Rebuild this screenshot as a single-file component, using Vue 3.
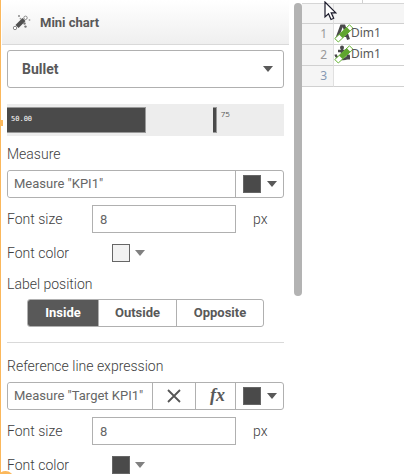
<script setup>
import { ref } from 'vue'

const chartType = ref('Bullet')
const measure = ref('Measure "KPI1"')
const target = ref('Measure "Target KPI1"')
const measureSize = ref('8')
const targetSize = ref('8')
const position = ref('Inside')
const positions = ['Inside', 'Outside', 'Opposite']
const value = 50
const reference = 75
</script>

<template>
  <main class="page">
    <section class="panel">
      <div class="content">
        <header class="head">
          <svg class="wand" viewBox="0 0 20 18" aria-hidden="true">
            <path d="M5 12.500 12 5.500" stroke="#505050" stroke-width="4.400" />
            <circle cx="3" cy="14" r="1.700" fill="#fff" stroke="#888" />
            <circle cx="13.500" cy="3.800" r="1.700" fill="#fff" stroke="#888" />
            <circle cx="7" cy="2" r="1" fill="#888" />
            <circle cx="8.500" cy="4.600" r=".9" fill="#999" />
            <circle cx="12.500" cy="9.500" r="1.200" fill="#777" />
            <circle cx="13.500" cy="12.600" r="1.200" fill="#777" />
            <circle cx="17.500" cy="6" r=".9" fill="#aaa" />
          </svg>
          <h1>Mini chart</h1>
        </header>

        <form class="form" @submit.prevent>
          <div class="select">
            <select v-model="chartType" aria-label="Chart type">
              <option>Bullet</option>
            </select>
            <i class="arrow"></i>
          </div>

          <div class="chart">
            <div class="bar" :style="{ width: value + '%' }">50.00</div>
            <div class="target" :style="{ left: reference + '%' }"><span>75</span></div>
          </div>

          <label class="title" for="measure">Measure</label>
          <div class="group">
            <input id="measure" v-model="measure" type="text" />
            <button type="button" class="color" aria-label="Measure color">
              <i class="swatch dark"></i><i class="arrow"></i>
            </button>
          </div>
          <div class="row">
            <label for="measure-size">Font size</label>
            <input id="measure-size" v-model="measureSize" class="size" type="text" />
            <span>px</span>
          </div>
          <div class="row color-row">
            <label for="measure-color">Font color</label>
            <button id="measure-color" type="button" class="picker">
              <i class="swatch light"></i><i class="arrow soft"></i>
            </button>
          </div>

          <div class="title">Label position</div>
          <div class="segments" role="group" aria-label="Label position">
            <button
              v-for="p in positions"
              :key="p"
              type="button"
              :class="{ active: p === position }"
              @click="position = p"
            >{{ p }}</button>
          </div>

          <hr />

          <label class="title" for="target">Reference line expression</label>
          <div class="group">
            <input id="target" v-model="target" type="text" />
            <button type="button" class="clear" aria-label="Clear">
              <svg viewBox="0 0 14 14" width="14" height="14"><path d="M1 1 13 13M13 1 1 13" stroke="#555" stroke-width="1.800" /></svg>
            </button>
            <button type="button" class="fx">fx</button>
            <button type="button" class="color" aria-label="Reference line color">
              <i class="swatch dark"></i><i class="arrow"></i>
            </button>
          </div>
          <div class="row">
            <label for="target-size">Font size</label>
            <input id="target-size" v-model="targetSize" class="size" type="text" />
            <span>px</span>
          </div>
          <div class="row color-row">
            <label for="target-color">Font color</label>
            <button id="target-color" type="button" class="picker">
              <i class="swatch dark"></i><i class="arrow soft"></i>
            </button>
          </div>
        </form>
      </div>
      <div class="scroll"><div class="thumb"></div></div>
      <i class="handle"></i>
      <i class="knob"></i>
    </section>

    <section class="sheet">
      <div class="strip"><i></i></div>
      <table>
        <thead>
          <tr><th></th><th></th></tr>
        </thead>
        <tbody>
          <tr>
            <th>1</th>
            <td>
              <div class="cell">
                <svg viewBox="0 0 22 20" width="22" height="20" aria-hidden="true">
                  <path d="M2.500 15.500 7.500 2H10L14.500 15.500M5 11.500H12" fill="none" stroke="#4a4a4a" stroke-width="3" />
                  <path d="M.8 14.500 15.500 .8 19 4.300 4.300 18Z" fill="#fff" stroke="#64b432" />
                  <path d="M5 10.600 12.800 3.300 16.300 6.800 8.500 14.100Z" fill="#5fa52e" />
                </svg>
                <span>Dim1</span>
              </div>
            </td>
          </tr>
          <tr>
            <th>2</th>
            <td>
              <div class="cell">
                <svg viewBox="0 0 22 20" width="22" height="20" aria-hidden="true">
                  <path d="M8 3V14M4 6H12M1.500 9.500Q2.500 13.500 8 14T14.500 9.500" fill="none" stroke="#4a4a4a" stroke-width="2.400" />
                  <path d="M12 14.500H16V9.500Z" fill="#4a4a4a" />
                  <circle cx="8" cy="2.500" r="2" fill="#4a4a4a" />
                  <path d="M.8 14.500 15.500 .8 19 4.300 4.300 18Z" fill="#fff" stroke="#64b432" />
                  <path d="M5 10.600 12.800 3.300 16.300 6.800 8.500 14.100Z" fill="#5fa52e" />
                </svg>
                <span>Dim1</span>
              </div>
            </td>
          </tr>
          <tr><th class="blue">3</th><td></td></tr>
        </tbody>
      </table>
      <svg class="cursor" viewBox="0 0 13 20" width="13" height="20" aria-hidden="true">
        <path d="M1 1V16L4.500 12.800 7 18.500 9.700 17.300 7.200 11.800H11.800Z" fill="#fff" stroke="#1a1a2a" stroke-width="1.200" />
      </svg>
    </section>
  </main>
</template>

<style>
body { background: #fff; overflow: hidden; }
</style>

<style scoped>
* { box-sizing: border-box; }
.page {
  display: grid;
  grid-template-columns: minmax(0, 1fr) 102px;
  height: 100vh;
  overflow: hidden;
  font: 14px/20px Roboto, "Noto Sans", sans-serif;
  color: #595959;
}
.panel {
  position: relative;
  display: flex;
  gap: 5px;
  min-width: 0;
  overflow: hidden;
  border-left: 1px solid #fbb85c;
}
.content { flex: 1; min-width: 0; }
.head {
  display: flex;
  align-items: center;
  gap: 8px;
  height: 45px;
  padding: 2px 10px 0;
  margin-left: 1px;
  border-bottom: 1px solid #d9d9d9;
  background: linear-gradient(#fff, #efefef);
}
.wand { width: 20px; height: 18px; }
h1 { margin: 0; font-size: 13px; line-height: 20px; font-weight: 700; }
.form { display: flex; flex-direction: column; padding: 5px 5px 0 6px; }
button, input, select { font: inherit; color: inherit; margin: 0; min-width: 0; }
input { color: #666; }
button { padding: 0; border: 0; background: none; }
.select { position: relative; display: grid; }
.select select {
  appearance: none;
  height: 38px;
  padding: 0 14px;
  border: 1px solid #b0b0b0;
  border-radius: 3px;
  background: #fff;
  font-weight: 700;
}
.select .arrow { position: absolute; right: 11px; top: 16px; pointer-events: none; }
.arrow {
  border: 5px solid transparent;
  border-top: 6px solid #595959;
  border-bottom: 0;
}
.arrow.soft { border-top-color: #808080; }
.chart {
  position: relative;
  height: 32px;
  margin: 16px 0 8px;
  padding: 3px 0;
  background: #ededed;
}
.bar {
  height: 26px;
  padding: 0 4px;
  border: 1px solid #999;
  border-left: 0;
  background: #4a4a4a;
  color: #fff;
  font: 7px/23px "DejaVu Sans Mono", monospace;
}
.target {
  position: absolute;
  top: 3px;
  width: 4px;
  height: 26px;
  border: 1px solid #999;
  border-left: 0;
  background: #4a4a4a;
  margin-left: -2px;
}
.target span { position: absolute; left: 8px; top: 0; font: 8px/12px "Open Sans", sans-serif; }
.title, .row label, .row span { font-weight: 300; color: #404040; }
.title { height: 20px; margin-bottom: 6px; }
.group {
  display: flex;
  height: 28px;
  border: 1px solid #b0b0b0;
  border-radius: 3px;
  font-size: 13px;
}
.group input { flex: 1; padding: 0 6px; border: 0; border-radius: 3px; background: #fff; }
.group button { display: flex; align-items: center; justify-content: center; border-left: 1px solid #b0b0b0; }
.group .color { width: 48px; gap: 6px; }
.group .clear { width: 43px; }
.group .fx { width: 40px; font: italic 700 18px/20px "Liberation Serif", serif; padding-left: 4px; padding-bottom: 2px; }
.swatch { width: 18px; height: 18px; border: 1px solid #666; }
.dark { background: #4a4a4a; }
.light { background: #f2f2f2; }
.row { display: grid; grid-template-columns: 85px minmax(0, 1fr) 48px; align-items: center; height: 28px; margin-top: 7px; }
.size { height: 28px; padding: 0 7px; border: 1px solid #b0b0b0; font-size: 13px; background: #fff; }
.row span { padding-left: 17px; }
.color-row { grid-template-columns: 105px minmax(0, 1fr); height: 20px; margin: 10px 0 11px; }
.picker { display: flex; align-items: center; gap: 5px; }
.segments {
  display: flex;
  height: 28px;
  margin: -1px 20px 15px;
  border: 1px solid #b0b0b0;
  border-radius: 3px;
  overflow: hidden;
  font-size: 13px;
}
.segments button { flex: 1 1 78px; font-weight: 700; }
.segments button:first-child { flex-basis: 70px; }
.segments button:last-child { flex-basis: 87px; }
.segments button + button { border-left: 1px solid #b0b0b0; }
.segments .active { background: #595959; color: #fff; }
hr { width: 100%; height: 1px; margin: 0 0 13px; border: 0; background: #d9d9d9; }
.scroll { width: 8px; padding-top: 3px; }
.thumb { height: 293px; border-radius: 4px; background: #b3b3b3; }
.handle { position: absolute; left: -1px; top: 120px; width: 3px; height: 6px; background: #fbb85c; }
.knob { position: absolute; left: -4px; bottom: -14px; width: 17px; height: 17px; border-radius: 50%; background: #fbb85c; }
.sheet { position: relative; }
.strip { height: 3px; }
.strip i { display: block; width: 1px; height: 3px; margin-left: 60px; background: #d0d0d0; }
table { width: 100%; border-collapse: separate; border-spacing: 0; table-layout: fixed; border-top: 1px solid #d6d6d6; font: 12px/20px "Noto Sans", sans-serif; }
th, td { height: 21px; padding: 0; border-bottom: 1px solid #d0d0d0; }
thead th { height: 20px; background: #f5f5f5; }
th:first-child { width: 32px; padding-right: 6px; border-right: 1px solid #e0e0e0; background: #f5f5f5; color: #999; font-weight: 400; text-align: right; }
tbody th.blue { color: #8599b3; }
.cell { display: flex; height: 20px; }
.cell svg { flex: none; margin-right: -5px; }
.cell span { font-size: 12px; line-height: 18px; }
.cursor { position: absolute; left: 22px; top: 1px; }
</style>
